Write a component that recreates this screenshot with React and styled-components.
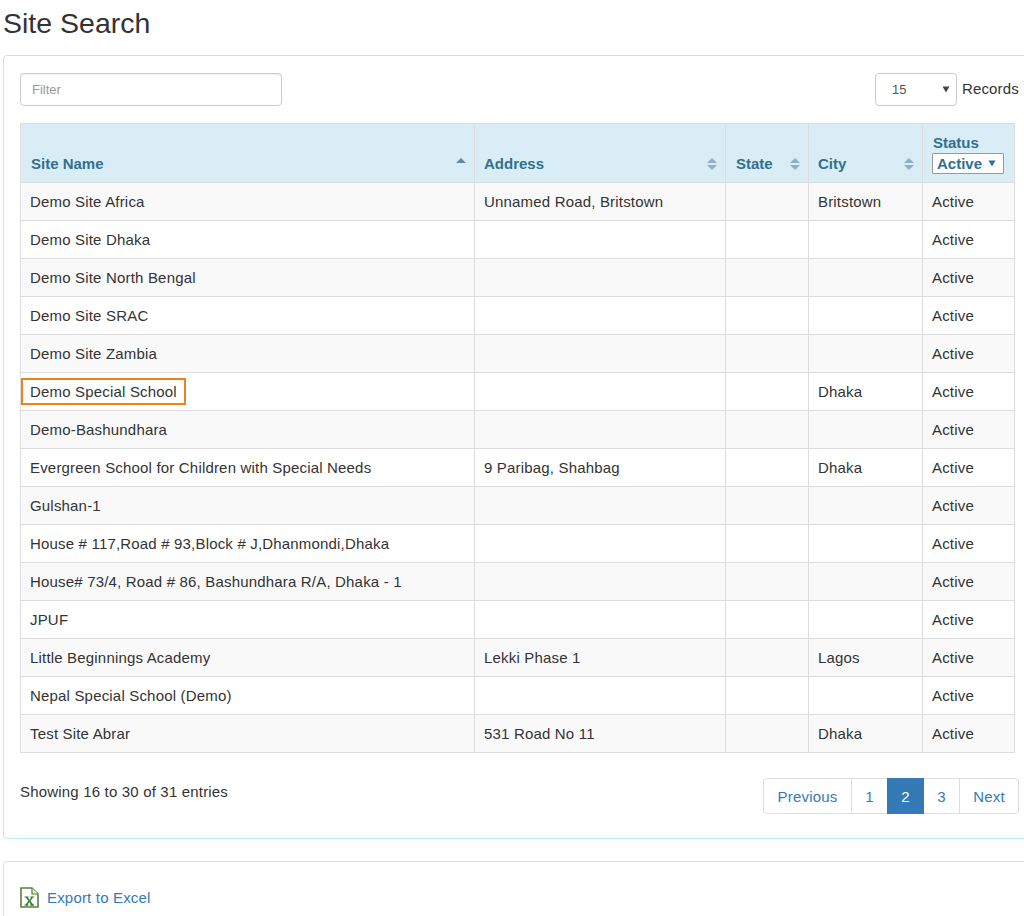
import React from 'react'
import styled, { createGlobalStyle } from 'styled-components'

const GlobalStyle = createGlobalStyle`
    html, body {
        margin: 0;
        padding: 0;
        background: #fff;
        overflow: hidden;
        height: 916px;
    }
    body {
        font-family: "Liberation Sans", Arial, sans-serif;
        font-size: 15px;
        letter-spacing: 0.18px;
        color: #333;
    }
`

const Page = styled.div`
    width: 1033px;
    height: 916px;
    overflow: hidden;
    padding-left: 3px;
`

const Title = styled.h1`
    margin: 0;
    height: 55px;
    padding-top: 5px;
    box-sizing: border-box;
    font-size: 28.5px;
    line-height: 36px;
    font-weight: 400;
    letter-spacing: 0;
    color: #333;
`

const Panel = styled.section`
    box-sizing: border-box;
    border: 1px solid #bce8f1;
    border-radius: 4px;
    padding: ${p => p.$compact ? '24px 16px 0' : '17px 16px 0'};
    height: ${p => p.$compact ? '80px' : '784px'};
    margin-bottom: 22px;
`

const TopBar = styled.div`
    display: flex;
    justify-content: space-between;
    align-items: flex-start;
    height: 50px;
`

const FilterInput = styled.input`
    box-sizing: border-box;
    width: 262px;
    height: 33px;
    padding: 0 11px 1px;
    border: 1px solid #ccc;
    border-radius: 4px;
    font-family: inherit;
    font-size: 13px;
    color: #555;
    box-shadow: inset 0 1px 1px rgba(0, 0, 0, .075);
    &::placeholder {
        color: #999;
    }
`

const RecordsBox = styled.div`
    display: flex;
    align-items: flex-start;
    gap: 5px;
`

const RecordsSelect = styled.div`
    box-sizing: border-box;
    width: 82px;
    height: 33px;
    padding: 0 6px 1px 16px;
    border: 1px solid #ccc;
    border-radius: 4px;
    display: flex;
    align-items: center;
    justify-content: space-between;
    font-size: 13px;
    color: #555;
`

const RecordsLabel = styled.span`
    line-height: 31px;
`

const Table = styled.table`
    width: 994px;
    table-layout: fixed;
    border-collapse: collapse;
`

const HeadCell = styled.th`
    box-sizing: border-box;
    height: 59px;
    padding: 0 8px 8px ${p => p.$left}px;
    border: 1px solid #ddd;
    background: #d9edf7;
    color: #31708f;
    font-size: 15px;
    font-weight: 700;
    letter-spacing: 0;
    text-align: left;
    vertical-align: bottom;
    line-height: 20px;
`

const HeadInner = styled.div`
    display: flex;
    justify-content: space-between;
    align-items: center;
`

const StatusBox = styled.div`
    box-sizing: border-box;
    width: 72px;
    height: 21px;
    margin: 0 0 0 -1px;
    padding: 0 7px 0 4px;
    border: 1px solid #999;
    border-radius: 1px;
    background: #fff;
    display: flex;
    align-items: center;
    justify-content: space-between;
    line-height: 18px;
`

const Row = styled.tr`
    background: ${p => p.$odd ? '#f9f9f9' : '#fff'};
`

const Cell = styled.td`
    box-sizing: border-box;
    height: 38px;
    padding: 0 9px;
    border: 1px solid #ddd;
    line-height: 20px;
    white-space: nowrap;
`

const Highlighted = styled.span`
    display: inline-block;
    box-sizing: border-box;
    height: 27px;
    margin-left: -9px;
    padding: 0 7px;
    border: 2px solid #f08020;
    line-height: 23px;
    vertical-align: middle;
`

const Footer = styled.div`
    display: flex;
    justify-content: space-between;
    align-items: flex-start;
    margin-top: 25px;
`

const Info = styled.div`
    line-height: 28px;
`

const Pager = styled.nav`
    display: flex;
    height: 36px;
`

const PageLink = styled.a`
    box-sizing: border-box;
    width: ${p => p.$w}px;
    height: 36px;
    margin-left: -1px;
    display: flex;
    align-items: center;
    justify-content: center;
    border: 1px solid ${p => p.$active ? '#337ab7' : '#ddd'};
    background: ${p => p.$active ? '#337ab7' : '#fff'};
    color: ${p => p.$active ? '#fff' : '#337ab7'};
    position: relative;
    z-index: ${p => p.$active ? 1 : 0};
    &:first-child {
        border-radius: 4px 0 0 4px;
    }
    &:last-child {
        border-radius: 0 4px 4px 0;
    }
`

const ExportLink = styled.a`
    display: flex;
    align-items: center;
    gap: 8px;
    color: #337ab7;
    height: 22px;
`

function SortIcon({ up }) {
    return (
        <svg width="10" height="14" viewBox="0 0 10 14">
            <path d="M5 1 L10 6 L0 6 Z" fill={up ? '#5d8aa6' : '#8fb0c6'} />
            <path d="M5 13 L10 8 L0 8 Z" fill={up ? '#d9edf7' : '#8fb0c6'} />
        </svg>
    )
}

function Caret({ color }) {
    return (
        <svg width="8" height="7" viewBox="0 0 8 7">
            <path d="M0.5 0.5 L7.5 0.5 L4 6.5 Z" fill={color} />
        </svg>
    )
}

function ExcelIcon() {
    return (
        <svg width="19" height="21" viewBox="0 0 19 21">
            <path d="M1 1 H12 L18 7 V20 H1 Z" fill="#fff" stroke="#5c8038" strokeWidth="1.6" />
            <path d="M12 1 V7 H18" fill="#e6efdc" stroke="#5c8038" strokeWidth="1.2" />
            <path d="M4.6 9.4 H8.6 V10.6 H7.9 L9.5 12.9 L11.1 10.6 H10.4 V9.4 H14 V10.6 H13 L10.4 14.1 L13.2 17.6 H14.2 V18.8 H10.2 V17.6 H11 L9.3 15.3 L7.6 17.6 H8.4 V18.8 H4.6 V17.6 H5.6 L8.4 14.1 L5.8 10.6 H4.6 Z" fill="#2f7d32" />
        </svg>
    )
}

const columns = [
    { title: 'Site Name', width: 454, left: 10, up: true },
    { title: 'Address', width: 251, left: 9 },
    { title: 'State', width: 83, left: 10 },
    { title: 'City', width: 114, left: 9 },
]

const sites = [
    ['Demo Site Africa', 'Unnamed Road, Britstown', 'Britstown'],
    ['Demo Site Dhaka', '', ''],
    ['Demo Site North Bengal', '', ''],
    ['Demo Site SRAC', '', ''],
    ['Demo Site Zambia', '', ''],
    ['Demo Special School', '', 'Dhaka'],
    ['Demo-Bashundhara', '', ''],
    ['Evergreen School for Children with Special Needs', '9 Paribag, Shahbag', 'Dhaka'],
    ['Gulshan-1', '', ''],
    ['House # 117,Road # 93,Block # J,Dhanmondi,Dhaka', '', ''],
    ['House# 73/4, Road # 86, Bashundhara R/A, Dhaka - 1', '', ''],
    ['JPUF', '', ''],
    ['Little Beginnings Academy', 'Lekki Phase 1', 'Lagos'],
    ['Nepal Special School (Demo)', '', ''],
    ['Test Site Abrar', '531 Road No 11', 'Dhaka'],
]

const pages = [
    { label: 'Previous', w: 89 },
    { label: '1', w: 37 },
    { label: '2', w: 37, active: true },
    { label: '3', w: 37 },
    { label: 'Next', w: 60 },
]

export default function App() {
    return (
        <Page>
            <GlobalStyle />
            <Title>Site Search</Title>
            <Panel>
                <TopBar>
                    <FilterInput placeholder="Filter" />
                    <RecordsBox>
                        <RecordsSelect>
                            15
                            <Caret color="#444" />
                        </RecordsSelect>
                        <RecordsLabel>Records</RecordsLabel>
                    </RecordsBox>
                </TopBar>
                <Table>
                    <colgroup>
                        {columns.map(c => <col key={c.title} style={{ width: c.width }} />)}
                        <col style={{ width: 92 }} />
                    </colgroup>
                    <thead>
                        <tr>
                            {columns.map(c => (
                                <HeadCell key={c.title} $left={c.left}>
                                    <HeadInner>
                                        {c.title}
                                        <SortIcon up={c.up} />
                                    </HeadInner>
                                </HeadCell>
                            ))}
                            <HeadCell $left={10}>
                                Status
                                <StatusBox>
                                    Active
                                    <Caret color="#31708f" />
                                </StatusBox>
                            </HeadCell>
                        </tr>
                    </thead>
                    <tbody>
                        {sites.map((s, i) => (
                            <Row key={s[0]} $odd={i % 2 === 0}>
                                <Cell>{s[0] === 'Demo Special School' ? <Highlighted>{s[0]}</Highlighted> : s[0]}</Cell>
                                <Cell>{s[1]}</Cell>
                                <Cell />
                                <Cell>{s[2]}</Cell>
                                <Cell>Active</Cell>
                            </Row>
                        ))}
                    </tbody>
                </Table>
                <Footer>
                    <Info>Showing 16 to 30 of 31 entries</Info>
                    <Pager>
                        {pages.map(p => (
                            <PageLink key={p.label} $w={p.w} $active={p.active}>{p.label}</PageLink>
                        ))}
                    </Pager>
                </Footer>
            </Panel>
            <Panel $compact>
                <ExportLink>
                    <ExcelIcon />
                    Export to Excel
                </ExportLink>
            </Panel>
        </Page>
    )
}
